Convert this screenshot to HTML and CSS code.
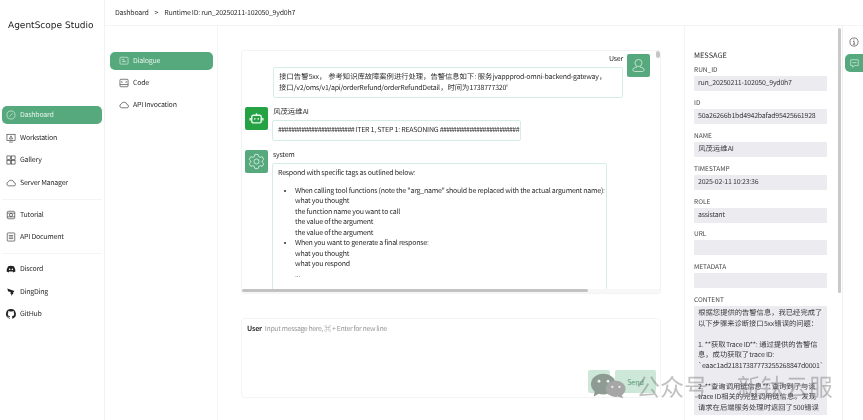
FILE: index.html
```html
<!DOCTYPE html>
<html>
<head>
    <meta charset="utf-8">
    <link rel="stylesheet" href="styles.css">
</head>
<body>
    <div class="app">
        <aside class="sidebar">
            <div class="logo">AgentScope Studio</div>
            <nav class="nav-group first">
                <a class="nav-item active">
                    <svg viewBox="0 0 16 16"><circle cx="8" cy="8" r="6.500"/><path d="M5.500 10.500 10.500 5.500"/></svg>
                    <span>Dashboard</span>
                </a>
                <a class="nav-item">
                    <svg viewBox="0 0 16 16"><rect x="1.500" y="2" width="13" height="10"/><path d="M5 14.500h6M8 4.500 5.500 9.500h5z"/></svg>
                    <span>Workstation</span>
                </a>
                <a class="nav-item">
                    <svg viewBox="0 0 16 16"><rect x="1.500" y="1.500" width="5.500" height="5.500"/><rect x="9" y="1.500" width="5.500" height="5.500"/><rect x="1.500" y="9" width="5.500" height="5.500"/><rect x="9" y="9" width="5.500" height="5.500"/></svg>
                    <span>Gallery</span>
                </a>
                <a class="nav-item">
                    <svg viewBox="0 0 16 16"><path d="M4 12.500h8.500a2.500 2.500 0 0 0 .5-5 5 5 0 0 0-9.500-1A3.100 3.100 0 0 0 4 12.500z"/></svg>
                    <span>Server Manager</span>
                </a>
            </nav>
            <nav class="nav-group">
                <a class="nav-item">
                    <svg viewBox="0 0 16 16"><rect x="2" y="2" width="12" height="12" rx="2"/><circle cx="8" cy="8" r="2.500"/><path d="M2 5h12M2 11h12"/></svg>
                    <span>Tutorial</span>
                </a>
                <a class="nav-item">
                    <svg viewBox="0 0 16 16"><rect x="2" y="1.500" width="12" height="13" rx="1"/><path d="M4.500 5.500h7M4.500 8h7M4.500 10.500h7"/></svg>
                    <span>API Document</span>
                </a>
            </nav>
            <nav class="nav-group">
                <a class="nav-item">
                    <svg class="solid" viewBox="0 0 16 16"><path d="M3.500 3.500Q8 2 12.500 3.500 15 7 15 12q-1.500 1.200-3.200 1.500l-.8-1.500H5l-.8 1.500Q2.500 13.200 1 12q0-5 2.500-8.500z"/><circle class="hole" cx="5.800" cy="8.500" r="1.300"/><circle class="hole" cx="10.200" cy="8.500" r="1.300"/></svg>
                    <span>Discord</span>
                </a>
                <a class="nav-item">
                    <svg class="solid" viewBox="0 0 16 16"><path d="M2 2.500 13.500 6.500 11 9.500l1 .5-4 4.500 .7-3.500-2-.7 1-2.300L3.500 7z"/></svg>
                    <span>DingDing</span>
                </a>
                <a class="nav-item">
                    <svg class="gh" viewBox="0 0 16 16"><path d="M8 0a8 8 0 0 0-2.500 15.600c.4.100.5-.2.500-.4v-1.400c-2.200.5-2.700-1-2.700-1-.4-.9-.9-1.200-.9-1.200-.7-.5.100-.5.100-.5.800.100 1.200.8 1.200.8.700 1.200 1.900.9 2.300.7.100-.5.300-.9.500-1.100-1.800-.2-3.600-.9-3.600-4 0-.9.300-1.600.8-2.100-.1-.2-.4-1 .1-2.100 0 0 .7-.2 2.200.8a7.600 7.600 0 0 1 4 0c1.500-1 2.200-.8 2.200-.8.400 1.100.2 1.900.1 2.100.5.600.8 1.300.8 2.100 0 3.100-1.900 3.700-3.600 3.900.3.300.5.700.5 1.500v2.200c0 .2.100.5.600.4A8 8 0 0 0 8 0z"/></svg>
                    <span>GitHub</span>
                </a>
            </nav>
        </aside>

        <div class="page">
            <header class="topbar">
                <span>Dashboard</span>
                <span class="crumb-sep">&gt;</span>
                <span>Runtime ID: run_20250211-102050_9yd0h7</span>
            </header>

            <div class="page-body">
                <div class="subnav">
                    <a class="nav-item active">
                        <svg viewBox="0 0 16 16"><rect x="1.500" y="2" width="13" height="11" rx="1.500"/><path d="M4.500 5.500H8v3.500H4.500M8 9h3.500"/></svg>
                        <span>Dialogue</span>
                    </a>
                    <a class="nav-item">
                        <svg viewBox="0 0 16 16"><rect x="1.500" y="2" width="13" height="12" rx="1.500"/><path d="M1.500 10.500h13M5.500 4.500 3.800 6.200l1.700 1.700M10.500 4.500l1.700 1.700-1.700 1.700"/></svg>
                        <span>Code</span>
                    </a>
                    <a class="nav-item">
                        <svg viewBox="0 0 16 16"><path d="M4 12.500h8.500a2.500 2.500 0 0 0 .5-5 5 5 0 0 0-9.500-1A3.100 3.100 0 0 0 4 12.500z"/></svg>
                        <span>API Invocation</span>
                    </a>
                </div>

                <main class="center">
                    <section class="chat-card">
                        <div class="chat-scroll">
                            <div class="msg msg-user">
                                <div class="msg-body">
                                    <div class="msg-name">User</div>
                                    <div class="bubble bubble-user"><span class="zh">接口告警</span>5xx<span class="zh">，</span> <span class="zh">参考知识库故障案例进行处理，告警信息如下</span>: <span class="zh">服务</span>jvappprod-omni-backend-gateway<span class="zh">，接口</span>/v2/oms/v1/api/orderRefund/orderRefundDetail<span class="zh">，时间为</span>1738777320'</div>
                                </div>
                                <div class="avatar">
                                    <svg viewBox="0 0 24 24"><circle cx="12" cy="8.500" r="5"/><path d="M9.500 13.500v1c-3 .5-5.500 1.500-5.500 3.500 0 1.500 1.500 2.500 3 2.500h10c1.500 0 3-1 3-2.500 0-2-2.500-3-5.500-3.500v-1"/></svg>
                                </div>
                            </div>
                            <div class="msg msg-ai">
                                <div class="avatar avatar-bot">
                                    <svg viewBox="0 0 24 24"><rect x="6" y="8" width="12" height="9.500" rx="2"/><path d="M12 8V5.500M4 11.500v3M20 11.500v3"/><circle class="dot" cx="9.800" cy="12.500" r="1"/><circle class="dot" cx="14.200" cy="12.500" r="1"/></svg>
                                </div>
                                <div class="msg-body">
                                    <div class="msg-name"><span class="zh">风茂运维</span>AI</div>
                                    <div class="bubble bubble-iter"><span class="hashes">#######################</span> ITER 1, STEP 1: REASONING <span class="hashes">########################</span></div>
                                </div>
                            </div>
                            <div class="msg msg-system">
                                <div class="avatar avatar-gear">
                                    <svg viewBox="0 0 24 24"><circle cx="12" cy="12" r="3.200"/><path d="M10 3h4l.7 2.700 1.800 1 2.700-.8 2 3.400-2 2v1.400l2 2-2 3.400-2.700-.8-1.800 1L14 21h-4l-.7-2.700-1.800-1-2.700.8-2-3.400 2-2v-1.400l-2-2 2-3.400 2.700.8 1.800-1z"/></svg>
                                </div>
                                <div class="msg-body">
                                    <div class="msg-name">system</div>
                                    <div class="bubble bubble-system">
                                        <p>Respond with specific tags as outlined below:</p>
                                        <ul>
                                            <li>When calling tool functions (note the "arg_name" should be replaced with the actual argument name):<br>what you thought<br>the function name you want to call<br>the value of the argument<br>the value of the argument</li>
                                            <li>When you want to generate a final response:<br>what you thought<br>what you respond<br>...</li>
                                        </ul>
                                    </div>
                                </div>
                            </div>
                        </div>
                        <div class="v-thumb"></div>
                        <div class="h-track"><div class="h-thumb"></div></div>
                    </section>

                    <section class="input-card">
                        <div class="input-line">
                            <b>User</b>
                            <span class="placeholder">Input message here, ⌘ + Enter for new line</span>
                        </div>
                        <div class="input-actions">
                            <button class="btn btn-icon">
                                <svg viewBox="0 0 16 16"><path d="M10.500 2.500 3.500 9.500a2.500 2.500 0 0 0 3.500 3.500l6-6a1.600 1.600 0 0 0-2.300-2.300l-5.500 5.500"/></svg>
                            </button>
                            <button class="btn btn-send">Send</button>
                        </div>
                    </section>
                </main>

                <aside class="detail">
                    <h4>MESSAGE</h4>
                    <div class="field"><label>RUN_ID</label><div class="value">run_20250211-102050_9yd0h7</div></div>
                    <div class="field"><label>ID</label><div class="value">50a26266b1bd4942bafad95425661928</div></div>
                    <div class="field"><label>NAME</label><div class="value"><span class="zh">风茂运维</span>AI</div></div>
                    <div class="field"><label>TIMESTAMP</label><div class="value">2025-02-11 10:23:36</div></div>
                    <div class="field"><label>ROLE</label><div class="value">assistant</div></div>
                    <div class="field"><label>URL</label><div class="value"></div></div>
                    <div class="field"><label>METADATA</label><div class="value"></div></div>
                    <div class="field"><label>CONTENT</label>
                        <div class="value value-long"><span class="zh">根据您提供的告警信息，我已经完成了以下步骤来诊断接口</span>5xx<span class="zh">错误的问题：</span><br><br>1. **<span class="zh">获取</span>Trace ID**: <span class="zh">通过提供的告警信息，成功获取了</span>trace ID:<br><span class="nowrap">`eaac1ad21817387773255268847d0001`</span><br><br>2. **<span class="zh">查询调用链信息</span>**: <span class="zh">查询到了与该</span> trace ID<span class="zh">相关的完整调用链信息。发现请求在后端服务处理时返回了</span>500<span class="zh">错误</span></div>
                    </div>
                    <div class="detail-thumb"></div>
                </aside>

                <div class="rail">
                    <a class="rail-info">
                        <svg viewBox="0 0 16 16"><circle cx="8" cy="8" r="6.500"/><path d="M6.500 7H8.200V11.500M6.300 11.500h3.600M8 4v1.500"/></svg>
                    </a>
                    <a class="rail-chat">
                        <svg viewBox="0 0 16 16"><path d="M2.500 2.500h11v8.500H8l-2.500 2.500V11h-3z"/><path d="M5 6.800h6"/></svg>
                    </a>
                </div>
            </div>
        </div>
    </div>

    <div class="watermark">
        <svg viewBox="0 0 40 26"><ellipse cx="14" cy="11" rx="13" ry="11" fill="#8d9b92"/><path d="M5 18 4 24l7-4z" fill="#8d9b92"/><ellipse cx="27" cy="16" rx="10.500" ry="8.500" fill="#a6a6a6"/><path d="M33 22l2 4-6-2z" fill="#a6a6a6"/><circle cx="9.500" cy="8" r="1.500" fill="#eee"/><circle cx="19" cy="8" r="1.500" fill="#eee"/><circle cx="23.500" cy="14" r="1.200" fill="#eee"/><circle cx="31" cy="14" r="1.200" fill="#eee"/></svg>
        <span>公众号 · 新钛云服</span>
    </div>
</body>
</html>
```

FILE: styles.css
```css
html, body {
    margin: 0;
    height: 100%;
    overflow: hidden;
    background: white;
}

body {
    font-family: "Noto Sans CJK SC", "Noto Sans", sans-serif;
    font-size: 7px;
    letter-spacing: -0.23px;
    color: #2e2e2e;
    text-rendering: geometricPrecision;
}

.zh {
    margin: 0 0.250px;
    font-size: 7.300px;
    letter-spacing: 0;
}

.nowrap {
    white-space: nowrap;
}

.app {
    display: flex;
    height: 420px;
    filter: blur(0.4px);
}

svg {
    display: block;
    fill: none;
    stroke: currentColor;
    stroke-width: 1;
}

/* left sidebar */
.sidebar {
    width: 105px;
    flex-shrink: 0;
    box-sizing: border-box;
    padding: 0 2px;
    border-right: 1px solid #f1f3f2;
}

.logo {
    height: 106px;
    padding: 20px 0 0 6px;
    box-sizing: border-box;
    font-family: "DejaVu Sans", sans-serif;
    font-size: 9px;
    letter-spacing: 0;
    line-height: 12px;
    color: #222;
}

.nav-group {
    padding: 6px 0 7px;
    border-bottom: 1px solid #f3f4f3;
    display: flex;
    flex-direction: column;
    gap: 4.500px;
}

.nav-group.first {
    padding-top: 0;
}

.nav-group:last-child {
    border-bottom: none;
}

.nav-item {
    display: flex;
    align-items: center;
    gap: 4px;
    height: 18px;
    padding-left: 4px;
    border-radius: 5px;
    color: #2e2e2e;
}

.nav-item svg {
    width: 10px;
    height: 10px;
    flex-shrink: 0;
}

.nav-item svg.solid, .nav-item svg.gh {
    fill: #222;
    stroke: none;
}

.nav-item svg .hole {
    fill: white;
}

.nav-item.active {
    background: #55a97c;
    color: #e4f2ea;
}

/* page frame */
.page {
    flex: 1;
    min-width: 0;
    display: flex;
    flex-direction: column;
}

.topbar {
    height: 26px;
    flex-shrink: 0;
    box-sizing: border-box;
    display: flex;
    align-items: center;
    gap: 6px;
    padding-left: 10px;
    border-bottom: 1px solid #f3f4f3;
    color: #333;
}

.page-body {
    flex: 1;
    display: flex;
    min-height: 0;
}

.subnav {
    width: 113px;
    flex-shrink: 0;
    box-sizing: border-box;
    padding: 26px 4px 0 5px;
    border-right: 1px solid #f3f4f3;
    display: flex;
    flex-direction: column;
    gap: 4px;
}

.subnav .nav-item {
    padding-left: 9px;
}

/* chat */
.center {
    width: 466px;
    flex-shrink: 0;
    box-sizing: border-box;
    padding: 24px 23px 0;
    display: flex;
    flex-direction: column;
    gap: 24px;
}

.chat-card {
    position: relative;
    height: 244px;
    box-sizing: border-box;
    border: 1px solid #f2f3f3;
    border-radius: 3px;
    overflow: hidden;
}

.chat-scroll {
    height: 239px;
    overflow: hidden;
    padding: 3px 4px 0 3px;
    box-sizing: border-box;
    display: flex;
    flex-direction: column;
    gap: 9px;
}

.msg {
    display: flex;
    gap: 4px;
}

.msg-user {
    justify-content: flex-end;
    padding-right: 6px;
}

.msg-body {
    display: flex;
    flex-direction: column;
    min-width: 0;
}

.msg-name {
    height: 13px;
    padding: 0 0 0 1px;
    line-height: 10px;
}

.msg-user .msg-name {
    text-align: right;
}

.avatar {
    width: 23px;
    height: 23px;
    flex-shrink: 0;
    border-radius: 2px;
    background: #55a97c;
    color: #eaf5ee;
    display: flex;
    align-items: center;
    justify-content: center;
}

.avatar svg {
    width: 17px;
    height: 17px;
}

.avatar-bot {
    background: #25a244;
}

.avatar-bot svg {
    width: 19px;
    height: 19px;
    stroke-width: 1.800;
}

.avatar-bot .dot {
    fill: currentColor;
    stroke: none;
}

.avatar-gear svg {
    width: 19px;
    height: 19px;
}

.bubble {
    box-sizing: border-box;
    border: 1px solid #d5eee4;
    border-radius: 2px;
    padding: 4px 5px;
    line-height: 10.500px;
}

.bubble-user {
    width: 350px;
    height: 31px;
    padding-right: 9px;
}

.bubble-iter {
    width: 249px;
    height: 21px;
    white-space: nowrap;
    overflow: hidden;
}

.hashes {
    letter-spacing: -0.580px;
}

.bubble-system {
    width: 335px;
    height: 140px;
    padding: 4px 1px 4px 5px;
}

.bubble-system p {
    margin: 0 0 7px;
}

.bubble-system ul {
    margin: 0;
    padding-left: 17px;
}

.v-thumb {
    position: absolute;
    top: 0;
    right: 0;
    width: 4px;
    height: 7px;
    border-radius: 2px;
    background: #c6c6c6;
}

.h-track {
    position: absolute;
    left: 0;
    right: 0;
    bottom: 0;
    height: 4px;
    background: #f7f7f7;
}

.h-thumb {
    width: 346px;
    height: 3px;
    border-radius: 2px;
    background: #c2c2c2;
}

/* input box */
.input-card {
    position: relative;
    height: 80px;
    box-sizing: border-box;
    border: 1px solid #f3f4f3;
    border-radius: 4px;
    padding: 5px 5px;
    color: #999;
}

.input-line {
    display: flex;
    gap: 3px;
    line-height: 10px;
}

.input-line b {
    color: #333;
    font-weight: 600;
}

.placeholder {
    letter-spacing: -0.400px;
}

.input-actions {
    position: absolute;
    right: 4px;
    bottom: 4px;
    display: flex;
    gap: 5px;
}

.btn {
    height: 23px;
    border: none;
    border-radius: 2px;
    background: #cde8d8;
    color: #4f9d72;
    font: inherit;
    padding: 0;
    display: flex;
    align-items: center;
    justify-content: center;
}

.btn-icon {
    width: 22px;
}

.btn-icon svg {
    width: 11px;
    height: 11px;
}

.btn-send {
    width: 41px;
}

/* message details */
.detail {
    position: relative;
    width: 158px;
    flex-shrink: 0;
    box-sizing: border-box;
    padding: 24px 0 0 9px;
    border-left: 1px solid #f3f4f3;
    overflow: hidden;
}

.detail h4 {
    margin: 0 0 1px;
    font-size: 7.400px;
    font-weight: 400;
    letter-spacing: 0;
    line-height: 11px;
}

.field {
    width: 133px;
    margin-bottom: 3.900px;
}

.field label {
    display: block;
    font-size: 6.500px;
    letter-spacing: 0;
    line-height: 14px;
    color: #444;
}

.value {
    box-sizing: border-box;
    height: 15px;
    padding: 0 4px;
    background: #ebebf0;
    border-radius: 1px;
    line-height: 15px;
    white-space: nowrap;
    overflow: hidden;
    color: #3c3c3c;
}

.value-long {
    height: auto;
    padding: 2px 4px;
    line-height: 10.500px;
    white-space: normal;
}

.detail-thumb {
    position: absolute;
    top: 2px;
    right: 1px;
    width: 3px;
    height: 265px;
    border-radius: 2px;
    background: #c9c9c9;
}

.rail {
    flex: 1;
    padding-top: 7px;
    border-left: 1px solid #f1f1f1;
    display: flex;
    flex-direction: column;
    align-items: flex-end;
}

.rail-info {
    width: 18px;
    height: 18px;
    margin-bottom: 3px;
    display: flex;
    align-items: center;
    justify-content: center;
    color: #333;
}

.rail-info svg {
    width: 10px;
    height: 10px;
}

.rail-chat {
    width: 18px;
    height: 18px;
    border-radius: 5px 0 0 5px;
    background: #55a97c;
    color: #d9eee2;
    display: flex;
    align-items: center;
    justify-content: center;
}

.rail-chat svg {
    width: 11px;
    height: 11px;
}

/* watermark over the page */
.watermark {
    position: absolute;
    left: 590px;
    top: 372px;
    display: flex;
    align-items: center;
    gap: 8px;
    font-size: 24px;
    letter-spacing: 0;
    word-spacing: -3px;
    line-height: 28px;
    white-space: nowrap;
    color: rgba(120, 120, 120, 0.45);
}

.watermark svg {
    width: 38px;
    height: 26px;
    stroke: none;
}
```
